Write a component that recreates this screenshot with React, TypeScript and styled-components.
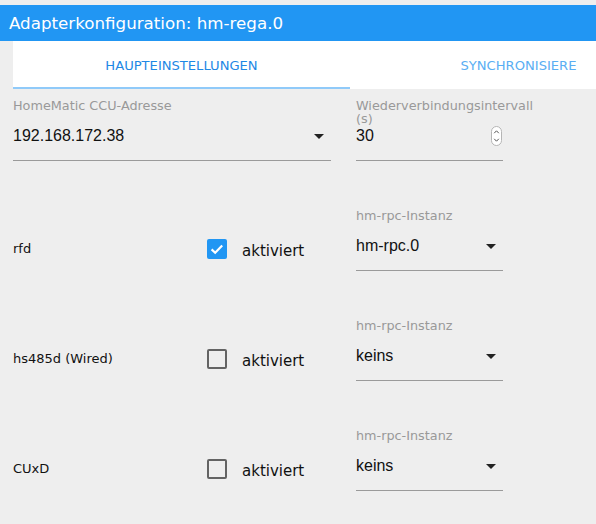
import React, { useState } from 'react';
import styled, { createGlobalStyle } from 'styled-components';

const GlobalStyle = createGlobalStyle`
  html, body {
    margin: 0;
    padding: 0;
    background: #eeeeee;
  }
  body {
    font-family: "DejaVu Sans", "Noto Sans", sans-serif;
  }
`;

const Page = styled.div`
  width: 596px;
  height: 524px;
  overflow: hidden;
  padding-top: 5px;
  box-sizing: border-box;
  background: #eeeeee;
`;

const TitleBar = styled.div`
  height: 36px;
  line-height: 36px;
  background: #2196f3;
  color: #ffffff;
  font-size: 16.7px;
  padding-left: 9px;
  white-space: nowrap;
`;

const Body = styled.div`
  padding-left: 13px;
`;

const Tabs = styled.div`
  display: flex;
  height: 48px;
  background: #ffffff;
  overflow: hidden;
`;

const Tab = styled.div<{ active?: boolean }>`
  position: relative;
  flex: 0 0 337px;
  display: flex;
  align-items: center;
  justify-content: center;
  font-size: 13.1px;
  text-transform: uppercase;
  color: ${p => (p.active ? '#1e88e5' : '#5aaef3')};
  cursor: pointer;
  &::after {
    content: '';
    position: absolute;
    left: 0;
    right: 0;
    bottom: 0;
    height: 2px;
    background: ${p => (p.active ? '#90caf9' : 'transparent')};
  }
`;

const Form = styled.div`
  display: grid;
  grid-template-columns: 318px 147px;
  column-gap: 25px;
  row-gap: 48px;
  padding-top: 10px;
`;

const Field = styled.div`
  display: flex;
  flex-direction: column;
`;

const Label = styled.div`
  height: 27px;
  font-size: 12.8px;
  line-height: 13px;
  color: #999999;
`;

const InputRow = styled.div`
  display: flex;
  align-items: flex-start;
  justify-content: space-between;
  height: 34px;
  border-bottom: 1px solid #9a9a9a;
`;

const Value = styled.span`
  font-family: "Liberation Sans", Arial, sans-serif;
  font-size: 16px;
  line-height: 20px;
  color: #111111;
`;

const ArrowBox = styled.span`
  display: flex;
  align-items: center;
  justify-content: center;
  width: 24px;
  height: 24px;
  margin-top: -2px;
`;

const SpinBox = styled.span`
  display: flex;
  margin-right: 1px;
`;

const ToggleCell = styled.div`
  display: flex;
  align-items: center;
  padding-top: 29px;
  height: 21px;
`;

const Name = styled.span`
  flex: 0 0 194px;
  font-size: 13px;
  color: #111111;
`;

const CheckLabel = styled.label`
  display: flex;
  align-items: center;
  gap: 15px;
  font-size: 15px;
  color: #111111;
  cursor: pointer;
`;

const Box = styled.span<{ checked: boolean }>`
  display: flex;
  align-items: center;
  justify-content: center;
  width: 20px;
  height: 20px;
  box-sizing: border-box;
  border-radius: 2px;
  background: ${p => (p.checked ? '#2196f3' : 'transparent')};
  border: ${p => (p.checked ? 'none' : '2px solid #636363')};
`;

const CheckText = styled.span`
  margin-top: 4px;
`;

const DropArrow = () => (
  <ArrowBox>
    <svg width="10" height="5" viewBox="0 0 10 5">
      <path d="M0 0 L10 0 L5 5 Z" fill="#222222" />
    </svg>
  </ArrowBox>
);

const Spinner = () => (
  <SpinBox>
    <svg width="11" height="20" viewBox="0 0 11 20">
      <rect x="0.5" y="0.5" width="10" height="19" rx="5" fill="#ffffff" stroke="#b5b5b5" />
      <path d="M3.2 7.2 L5.5 4.8 L7.8 7.2" fill="none" stroke="#555555" strokeWidth="1" />
      <path d="M3.2 12.8 L5.5 15.2 L7.8 12.8" fill="none" stroke="#555555" strokeWidth="1" />
    </svg>
  </SpinBox>
);

const Checkbox = ({ checked, onToggle }: { checked: boolean; onToggle: () => void }) => (
  <CheckLabel onClick={onToggle}>
    <Box checked={checked}>
      {checked && (
        <svg width="20" height="20" viewBox="0 0 20 20">
          <path d="M4.6 10.4 L8.2 13.8 L15.2 6.6" fill="none" stroke="#ffffff" strokeWidth="2.2" />
        </svg>
      )}
    </Box>
    <CheckText>aktiviert</CheckText>
  </CheckLabel>
);

type Daemon = { name: string; enabled: boolean; instance: string };

const App = () => {
  const [daemons, setDaemons] = useState<Daemon[]>([
    { name: 'rfd', enabled: true, instance: 'hm-rpc.0' },
    { name: 'hs485d (Wired)', enabled: false, instance: 'keins' },
    { name: 'CUxD', enabled: false, instance: 'keins' },
  ]);

  const toggle = (i: number) => {
    setDaemons(ds => ds.map((d, j) => (j === i ? { ...d, enabled: !d.enabled } : d)));
  };

  return (
    <Page>
      <GlobalStyle />
      <TitleBar>Adapterkonfiguration: hm-rega.0</TitleBar>
      <Body>
        <Tabs>
          <Tab active>Haupteinstellungen</Tab>
          <Tab>Synchronisiere</Tab>
        </Tabs>
        <Form>
          <Field>
            <Label>HomeMatic CCU-Adresse</Label>
            <InputRow>
              <Value>192.168.172.38</Value>
              <DropArrow />
            </InputRow>
          </Field>
          <Field>
            <Label>Wiederverbindungsintervall (s)</Label>
            <InputRow>
              <Value>30</Value>
              <Spinner />
            </InputRow>
          </Field>
          {daemons.map((d, i) => (
            <React.Fragment key={d.name}>
              <ToggleCell>
                <Name>{d.name}</Name>
                <Checkbox checked={d.enabled} onToggle={() => toggle(i)} />
              </ToggleCell>
              <Field>
                <Label>hm-rpc-Instanz</Label>
                <InputRow>
                  <Value>{d.instance}</Value>
                  <DropArrow />
                </InputRow>
              </Field>
            </React.Fragment>
          ))}
        </Form>
      </Body>
    </Page>
  );
};

export default App;
